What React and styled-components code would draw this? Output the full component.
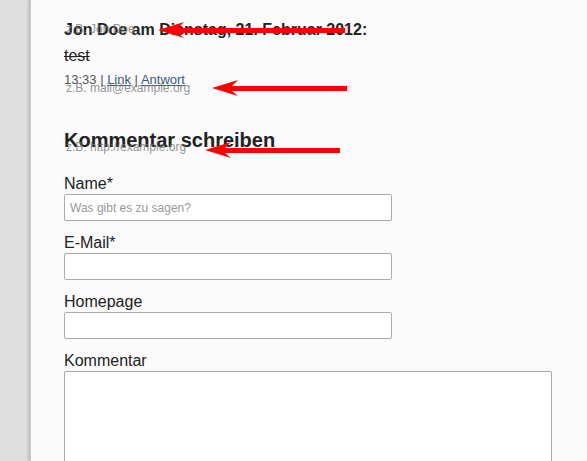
import styled, { createGlobalStyle } from "styled-components";

const GlobalStyle = createGlobalStyle`
    html, body {
        margin: 0;
        padding: 0;
        background: #dedede;
        font-family: "Liberation Sans", Arial, sans-serif;
        color: #222;
    }
`;

export default function App(){
    return (
        <>
            <GlobalStyle/>
            <Screen>
                <Gutter/>
                <Page>
                    <Comment>
                        <CommentHead>Jon Doe am Dienstag, 21. Februar 2012:</CommentHead>
                        <CommentText>test</CommentText>
                        <CommentMeta>
                            13:33 | <a href="#link">Link</a> | <a href="#antwort">Antwort</a>
                        </CommentMeta>
                    </Comment>

                    <FormTitle>Kommentar schreiben</FormTitle>
                    <Form>
                        <Label htmlFor="name">Name*</Label>
                        <Field id="name" placeholder="Was gibt es zu sagen?"/>
                        <Label htmlFor="mail">E-Mail*</Label>
                        <Field id="mail"/>
                        <Label htmlFor="home">Homepage</Label>
                        <Field id="home"/>
                        <Label htmlFor="text">Kommentar</Label>
                        <TextBox id="text"/>
                    </Form>

                    <Ghost top={22}>z.B. Jon Doe</Ghost>
                    <Ghost top={81}>z.B. mail@example.org</Ghost>
                    <Ghost top={140}>z.B. http://example.org</Ghost>

                    <Arrow top={22} left={127} width={187}/>
                    <Arrow top={80} left={181} width={135}/>
                    <Arrow top={142} left={174} width={135}/>
                </Page>
            </Screen>
        </>
    );
}

function Arrow({ top, left, width }){
    return (
        <ArrowBox style={{ top, left, width }}>
            <svg width={width} height="16" viewBox={`0 0 ${width} 16`}>
                <polygon points={`0,8 26,0 20,6 ${width},6 ${width},11 20,11 26,16`} fill="#ff0000"/>
            </svg>
        </ArrowBox>
    );
}

const Screen = styled.div`
    display: flex;
    height: 461px;
    overflow: hidden;
`;

const Gutter = styled.div`
    width: 30px;
    flex-shrink: 0;
    background: #dedede;
`;

const Page = styled.div`
    position: relative;
    flex: 1;
    background: #fafafa;
    box-shadow: -2px 0 2px rgba(0, 0, 0, 0.15);
    border-left: 1px solid #c8c8c8;
    padding: 20px 0 0 33px;
`;

const Comment = styled.div`
    margin-bottom: 40px;
`;

const CommentHead = styled.h3`
    margin: 0;
    font-size: 16px;
    font-weight: bold;
    line-height: 20px;
    color: #222;
`;

const CommentText = styled.p`
    margin: 6px 0 0;
    font-size: 16px;
    line-height: 20px;
    text-decoration: line-through;
    color: #222;
`;

const CommentMeta = styled.p`
    margin: 6px 0 0;
    font-size: 13px;
    line-height: 16px;
    color: #555;

    a{
        color: #3a5b7a;
        text-decoration: underline;
    }
`;

const FormTitle = styled.h2`
    margin: 0 0 22px;
    font-size: 20px;
    line-height: 24px;
    font-weight: bold;
    color: #222;
`;

const Form = styled.form`
    display: flex;
    flex-direction: column;
    align-items: flex-start;
`;

const Label = styled.label`
    font-size: 16px;
    line-height: 20px;
    color: #222;
`;

const Field = styled.input`
    box-sizing: border-box;
    width: 328px;
    height: 27px;
    margin: 0 0 12px;
    padding: 0 5px;
    border: 1px solid #a9a9a9;
    border-radius: 2px;
    background: #fff;
    font-family: "Liberation Sans", Arial, sans-serif;
    font-size: 12px;

    &::placeholder{
        color: #999;
    }
`;

const TextBox = styled.textarea`
    box-sizing: border-box;
    width: 488px;
    height: 120px;
    margin: 0;
    border: 1px solid #a9a9a9;
    border-radius: 2px;
    background: #fff;
    resize: none;
`;

const Ghost = styled.span`
    position: absolute;
    left: 35px;
    top: ${(p) => p.top}px;
    font-size: 12px;
    line-height: 14px;
    color: rgba(120, 120, 120, 0.8);
    pointer-events: none;
`;

const ArrowBox = styled.div`
    position: absolute;
    height: 16px;
    line-height: 0;
`;
